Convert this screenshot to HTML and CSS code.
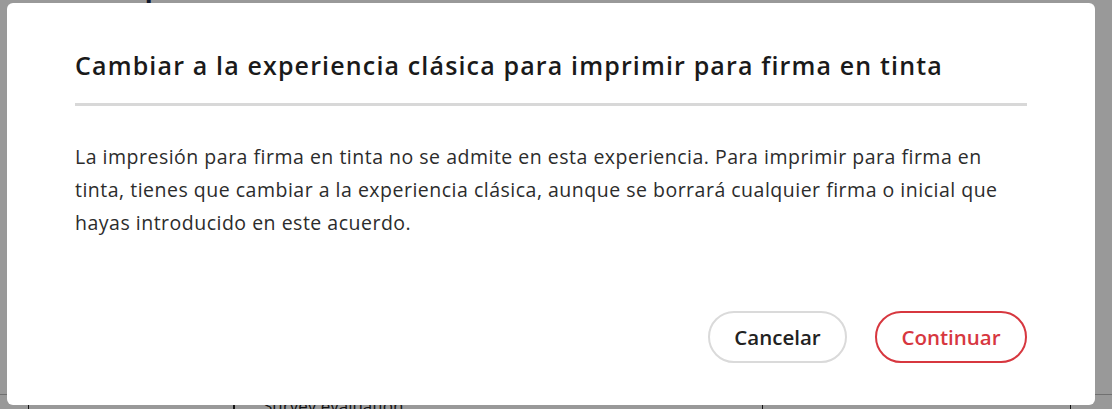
FILE: index.html
```html
<!DOCTYPE html>
<html lang="es">
<head>
    <meta charset="UTF-8">
    <meta name="viewport" content="width=device-width, initial-scale=1.0">
    <title>Cambiar a la experiencia clásica</title>
    <link rel="stylesheet" href="styles.css">
</head>
<body>
    <!-- Página que queda detrás del diálogo -->
    <div class="page">
        <div class="page-head">Acuerdo pendiente</div>
        <div class="table-row">
            <div class="cell cell-first"></div>
            <div class="cell cell-name">
                <span class="doc-icon"></span>
                <span>Survey evaluation</span>
            </div>
            <div class="cell cell-mid"></div>
            <div class="cell cell-last"></div>
        </div>
    </div>

    <!-- Fondo oscuro y diálogo -->
    <div class="overlay">
        <div class="dialog" role="dialog" aria-labelledby="dialogTitle">
            <h2 id="dialogTitle" class="dialog-title">Cambiar a la experiencia clásica para imprimir para firma en tinta</h2>
            <hr class="divider">
            <p class="dialog-text">La impresión para firma en tinta no se admite en esta experiencia. Para imprimir para firma en tinta, tienes que cambiar a la experiencia clásica, aunque se borrará cualquier firma o inicial que hayas introducido en este acuerdo.</p>
            <div class="dialog-actions">
                <button class="btn btn-secondary">Cancelar</button>
                <button class="btn btn-primary">Continuar</button>
            </div>
        </div>
    </div>
</body>
</html>
```

FILE: styles.css
```css
html, body {
    margin: 0;
    padding: 0;
}

body {
    font-family: "Open Sans", "Liberation Sans", sans-serif;
    background-color: #fff;
    color: #2c2c2c;
    width: 1112px;
    height: 409px;
    overflow: hidden;
}

.page {
    height: 409px;
    display: flex;
    flex-direction: column;
    justify-content: space-between;
}

.page-head {
    margin-top: -26px;
    padding-left: 30px;
    font-size: 26px;
    font-weight: 700;
    color: #1b2a4a;
    line-height: 30px;
}

.table-row {
    display: flex;
    height: 14px;
    border-top: 1px solid #bbb;
    font-size: 17px;
    color: #222;
}

.cell {
    border-right: 1px solid #222;
    height: 100%;
}

.cell-first {
    width: 28px;
}

.cell-name {
    width: 734px;
    display: flex;
    gap: 12px;
    padding-left: 204px;
    box-sizing: border-box;
    line-height: 22px;
    border-right: 1px solid #222;
}

.doc-icon {
    width: 16px;
    height: 10px;
    border-left: 2px solid #222;
    margin-top: 4px;
}

.cell-mid {
    width: 307px;
}

.cell-last {
    flex: 1;
    border-right: none;
}

.overlay {
    position: fixed;
    inset: 0;
    background-color: rgba(0, 0, 0, 0.4);
    padding: 3px 17px 4px 7px;
}

.dialog {
    background: #fff;
    border-radius: 6px;
    height: 402px;
    box-sizing: border-box;
    padding: 47px 68px 42px 68px;
    display: flex;
    flex-direction: column;
}

.dialog-title {
    margin: 0;
    font-size: 25px;
    line-height: 30px;
    letter-spacing: 1.15px;
    font-weight: 600;
    color: #1a1a1a;
    white-space: nowrap;
}

.divider {
    border: none;
    height: 3px;
    background-color: #d8d8d8;
    margin: 23px 0 34px 0;
}

.dialog-text {
    margin: 0;
    font-size: 19.5px;
    line-height: 33px;
    letter-spacing: 0.5px;
    color: #2c2c2c;
}

.dialog-actions {
    margin-top: auto;
    display: flex;
    justify-content: flex-end;
    gap: 28px;
}

.btn {
    height: 52px;
    border-radius: 26px;
    border: 2px solid #dadada;
    background: #fff;
    font-family: inherit;
    font-size: 20.5px;
    font-weight: 600;
    padding: 0;
    cursor: pointer;
}

.btn-secondary {
    color: #222;
    width: 139px;
}

.btn-primary {
    color: #d7373f;
    border-color: #d7373f;
    width: 152px;
}
```
